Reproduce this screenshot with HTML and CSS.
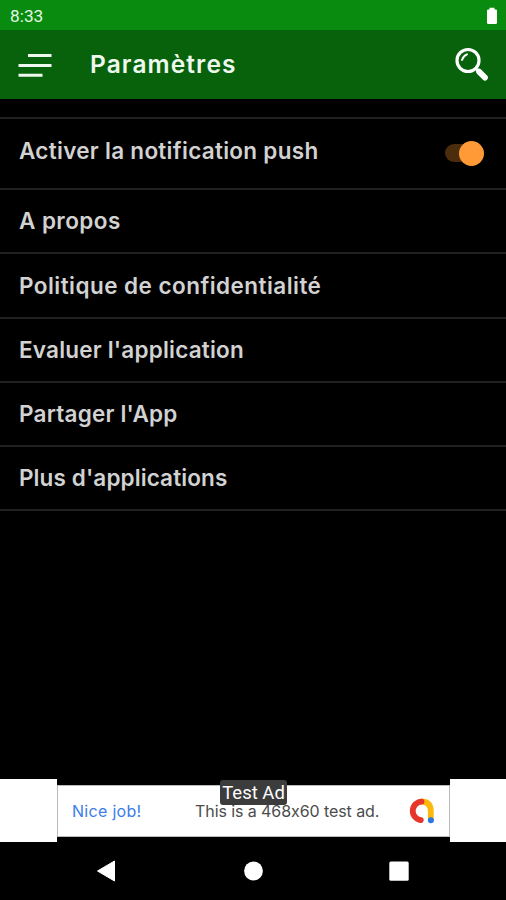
FILE: index.html
```html
<!DOCTYPE html>
<html lang="fr">
<head>
    <meta charset="UTF-8">
    <meta name="viewport" content="width=device-width, initial-scale=1.0">
    <title>Paramètres</title>
    <link rel="stylesheet" href="styles.css">
</head>
<body>

<div class="status-bar">
    <span class="time">8:33</span>
    <svg class="battery" width="12" height="18" viewBox="0 0 12 18"><path d="M3.5 .8h5v1.6h1.3q1.2 0 1.2 1.2v12.2q0 1.2-1.2 1.2H2.2Q1 17 1 15.800V3.600Q1 2.400 2.200 2.400h1.300z" fill="#fff"/></svg>
</div>

<header class="app-bar">
    <svg class="menu-icon" width="34" height="26" viewBox="0 0 34 26" stroke="#eef8ee" stroke-width="3">
        <path d="M10 3.500H33.500M.5 13.500H33.500M.5 23.300H24.500"/>
    </svg>
    <h1>Paramètres</h1>
    <svg class="search-icon" width="36" height="36" viewBox="0 0 36 36" fill="none" stroke="#fff">
        <circle cx="14" cy="13.500" r="11" stroke-width="3.200"/>
        <path d="M8 13Q9 9 13 7.300" stroke-width="1.900" stroke-linecap="round"/>
        <path d="M22.500 22l2 2" stroke-width="3"/>
        <path d="M25 24.600l6 6" stroke-width="5.800" stroke-linecap="round"/>
    </svg>
</header>

<ul class="settings">
    <li class="push">
        <span class="label-push">Activer la notification push</span>
        <span class="switch"><span class="thumb"></span></span>
    </li>
    <li><span class="label-about">A propos</span></li>
    <li class="privacy"><span class="label-privacy">Politique de confidentialité</span></li>
    <li><span class="label-rate">Evaluer l'application</span></li>
    <li><span class="label-share">Partager l'App</span></li>
    <li><span class="label-more">Plus d'applications</span></li>
</ul>

<div class="ad">
    <div class="banner">
        <span class="ad-label">Test Ad</span>
        <span class="ad-title">Nice job!</span>
        <span class="ad-text">This is a 468x60 test ad.</span>
        <svg class="ad-logo" width="26" height="26" viewBox="0 0 26 26" fill="none" stroke-width="5.800" stroke-linecap="round">
            <path d="M12.300 3.500Q21.800 3.500 21.800 13V22" stroke="#fbb90b" stroke-linecap="butt"/>
            <path d="M12.500 3.600A9.300 9.300 0 0 0 11.800 22.100" stroke="#e6352b"/>
            <circle cx="21.900" cy="22.300" r="3" fill="#2b75e4"/>
        </svg>
    </div>
</div>

<nav class="nav-bar">
    <svg width="20" height="22" viewBox="0 0 20 22"><path d="M1.500 11L18.500 1V21z" fill="#fff" stroke="#fff" stroke-linejoin="round"/></svg>
    <svg width="20" height="20" viewBox="0 0 20 20"><circle cx="10.500" cy="10" r="9.400" fill="#fff"/></svg>
    <svg width="20" height="20" viewBox="0 0 20 20"><rect x=".3" y=".5" width="19.400" height="19.200" rx="1.500" fill="#fff"/></svg>
</nav>

</body>
</html>
```
FILE: styles.css
```css
* {
    box-sizing: border-box;
}
body {
    margin: 0;
    height: 900px;
    display: flex;
    flex-direction: column;
    background-color: #000;
    color: #d2d2d2;
    font-family: Inter, sans-serif;
    overflow: hidden;
}
svg {
    display: block;
    flex-shrink: 0;
}
.status-bar {
    height: 30px;
    display: flex;
    align-items: center;
    justify-content: space-between;
    padding: 2px 8px 0 10px;
    background-color: #098b0f;
}
.time {
    font-family: Roboto, sans-serif;
    font-size: 17.3px;
    color: #e3f6e3;
}
.app-bar {
    height: 69px;
    display: flex;
    align-items: center;
    padding: 0 16px 0 18px;
    background-color: #08620c;
}
h1 {
    margin: 0 auto 2px 38px;
    font-size: 24.5px;
    font-weight: 600;
    line-height: 30px;
    letter-spacing: 1.1px;
    color: #eef8ee;
    white-space: nowrap;
}
.settings {
    list-style: none;
    margin: 18px 0 0;
    padding: 0;
    border-top: 2px solid #202020;
    font-size: 22.5px;
    font-weight: 600;
    line-height: 28px;
    white-space: nowrap;
}
.settings li {
    height: 64px;
    display: flex;
    align-items: center;
    justify-content: space-between;
    padding: 0 22px 0 19px;
    border-bottom: 2px solid #202020;
}
.settings .push {
    height: 71px;
    padding-bottom: 6px;
}
.settings .privacy {
    height: 65px;
}
.label-push {
    letter-spacing: 0.29px;
}
.label-about {
    letter-spacing: 0.42px;
}
.label-privacy {
    letter-spacing: 0.46px;
}
.label-rate {
    letter-spacing: 0.2px;
}
.label-share {
    letter-spacing: 0.22px;
}
.label-more {
    letter-spacing: 0.11px;
}
.switch {
    width: 39px;
    height: 18px;
    margin-top: 5px;
    display: flex;
    align-items: center;
    justify-content: flex-end;
    border-radius: 9px;
    background-color: #4b2d0e;
}
.thumb {
    width: 25px;
    height: 25px;
    flex-shrink: 0;
    border-radius: 50%;
    background-color: #ff9a36;
}
.ad {
    height: 63px;
    margin-top: auto;
    padding: 6px 56px 5px 57px;
    background: linear-gradient(to right, #fff 57px, #000 57px, #000 450px, #fff 450px);
}
.banner {
    position: relative;
    height: 52px;
    display: flex;
    align-items: center;
    padding: 0 14px 0 14px;
    background-color: #fff;
    border: 1px solid #b8bcbd;
    font-size: 16px;
    font-feature-settings: "calt" 0;
    white-space: nowrap;
}
.ad-label {
    position: absolute;
    left: 162px;
    top: -6px;
    width: 67px;
    height: 25px;
    border-radius: 3px;
    background-color: #3c3c3c;
    color: #fff;
    font-family: Roboto, sans-serif;
    font-size: 18.5px;
    line-height: 26px;
    text-align: center;
}
.ad-title {
    width: 123px;
    letter-spacing: 0.3px;
    color: #3c7de8;
}
.ad-text {
    letter-spacing: -0.08px;
    color: #4c4c4c;
}
.ad-logo {
    margin-left: auto;
}
.nav-bar {
    height: 58px;
    display: flex;
    align-items: center;
    justify-content: space-between;
    padding: 0 97px 0 96px;
}
```
